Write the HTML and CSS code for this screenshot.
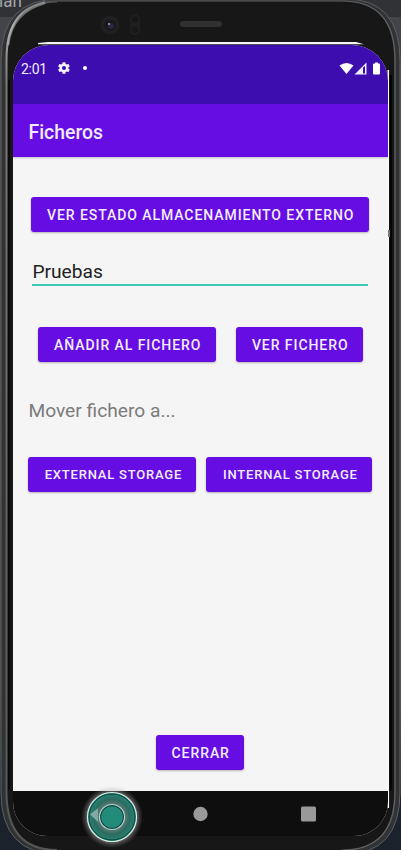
FILE: index.html
```html
<!DOCTYPE html>
<html lang="es">
<head>
<meta charset="utf-8">
<title>Ficheros</title>
<link rel="stylesheet" href="styles.css">
</head>
<body>
<div class="desktop">
  <span class="behind">lan</span>
  <svg class="frame" viewBox="0 0 401 850" aria-hidden="true">
    <defs>
      <linearGradient id="edge" x1="0" y1="0" x2="0" y2="1">
        <stop offset="0" stop-color="#505254"/><stop offset=".03" stop-color="#b0b0b0"/><stop offset=".1" stop-color="#777"/><stop offset=".5" stop-color="#666"/><stop offset="1" stop-color="#555"/>
      </linearGradient>
    </defs>
    <path d="M1 60Q1 -1 60 -1H345Q400 -1 400 60V792Q400 854 345 854H58Q1 854 1 792Z" fill="#303234" stroke="#5d5f61"/>
    <path d="M6 60Q6 1 57 1H342Q394 1 394 60V792Q394 850 342 850H57Q6 850 6 792Z" fill="#171718"/>
    <path d="M57 1.500Q6.500 1.500 6.500 60V792Q6.500 850 57 850" fill="none" stroke="url(#edge)" stroke-width="2"/>
    <path d="M8 44Q12 12 44 3" fill="none" stroke="#aaa" stroke-width="3" stroke-opacity=".6" stroke-linecap="round"/>
    <path d="M57 1H342Q395 1 395 60V792Q395 850 342 850" fill="none" stroke="#626466" stroke-width="1.200"/>
    <path d="M9 80V790" stroke="#060606" stroke-width="1.500"/>
    <path d="M390.500 75V790" stroke="#050505" stroke-width="3"/>
    <path d="M38 43 48 42H356L364 44.300H38Z" fill="#f4f4f6"/>
    <path d="M388.300 70V808" stroke="#fff" stroke-width="1.500"/>
    <circle cx="110" cy="25" r="9.500" fill="#202021"/>
    <circle cx="110" cy="25" r="5.500" fill="#17171b"/>
    <circle cx="111" cy="26" r="3" fill="#292943"/><circle cx="109" cy="24" r="1" fill="#aaa"/>
    <rect x="130" y="14" width="10" height="21" rx="5" fill="#1f1f20"/>
    <circle cx="135" cy="19.500" r="3" fill="#171718"/><circle cx="135" cy="30" r="3" fill="#171718"/>
    <rect x="180" y="21" width="42" height="6" rx="3" fill="#303030"/>
    <path d="M389 230v7" stroke="#777" stroke-width="2"/>
  </svg>
  <main class="screen">
    <header class="status">
      <span class="time">2:01</span>
      <svg class="gear" viewBox="0 0 24 24"><path fill="#f5f2ff" fill-rule="evenodd" d="M19.400 13c.1-.7.1-1.300 0-2l2.100-1.600c.2-.2.3-.5.100-.7l-2-3.400c-.1-.2-.4-.3-.6-.2l-2.500 1c-.5-.4-1.100-.7-1.700-1l-.4-2.600a.5.500 0 0 0-.5-.5h-4a.5.500 0 0 0-.5.500L9 5.100c-.6.300-1.200.6-1.700 1l-2.500-1a.5.500 0 0 0-.6.200l-2 3.400c-.1.300-.1.500.1.700L4.500 11c-.1.700-.1 1.300 0 2l-2.200 1.600c-.2.200-.2.500-.1.700l2 3.400c.1.200.4.300.6.200l2.500-1c.5.400 1.100.7 1.700 1l.4 2.600c0 .3.200.5.500.5h4c.3 0 .5-.2.500-.5l.4-2.600c.6-.3 1.200-.6 1.700-1l2.500 1c.2.100.5 0 .6-.2l2-3.400c.1-.2.1-.5-.1-.7ZM12 15.500a3.500 3.500 0 1 1 0-7 3.500 3.500 0 0 1 0 7Z"/></svg>
      <span class="dot"></span>
      <svg class="signals" viewBox="0 0 43 14">
        <path d="M.5 3.500Q7.500-1.500 14.500 3.500L7.500 12Z" fill="#fff"/>
        <path d="M15.500 12.500 27.500.5V12.500Z" fill="#f1edff"/><path d="M24 5.500V11.500H26V4Z" fill="#3d0db0"/>
        <path d="M34 2.500q0-1 1-1h1V.5h3v1h1q1 0 1 1V11.500q0 1-1 1h-5q-1 0-1-1Z" fill="#fff"/>
      </svg>
    </header>
    <h1 class="appbar">Ficheros</h1>
    <section class="content">
      <button class="btn state">VER ESTADO ALMACENAMIENTO EXTERNO</button>
      <div class="field">Pruebas</div>
      <div class="row actions"><button class="btn add">AÑADIR AL FICHERO</button><button class="btn view">VER FICHERO</button></div>
      <p class="label">Mover fichero a...</p>
      <div class="row storage"><button class="btn external">EXTERNAL STORAGE</button><button class="btn internal">INTERNAL STORAGE</button></div>
      <button class="btn close">CERRAR</button>
    </section>
    <nav class="nav">
      <svg viewBox="0 0 375 45"><circle cx="187.500" cy="23" r="7.200" fill="#999"/><rect x="288" y="15.500" width="15" height="15" rx="1.500" fill="#999"/></svg>
    </nav>
  </main>
  <svg class="touch" viewBox="0 0 70 70" aria-hidden="true">
    <defs><radialGradient id="halo"><stop offset=".7" stop-color="#fff" stop-opacity=".9"/><stop offset=".82" stop-color="#bbb" stop-opacity=".4"/><stop offset="1" stop-color="#888" stop-opacity="0"/></radialGradient>
    <radialGradient id="ring"><stop offset=".48" stop-color="#637f78"/><stop offset=".72" stop-color="#2c6b60"/><stop offset="1" stop-color="#268878"/></radialGradient></defs>
    <circle cx="35" cy="35" r="31" fill="url(#halo)"/>
    <circle cx="35" cy="35" r="24.500" fill="url(#ring)" stroke="#e4efec" stroke-width="1.200"/>
    <circle cx="35" cy="35" r="23" fill="none" stroke="#06473d" stroke-width="1"/>
    <path d="M13 32.500 21 26V40Z" fill="#80aaa2"/>
    <circle cx="35" cy="35" r="12.500" fill="#11483f" stroke="#c3d5d1" stroke-width="1.100"/>
    <circle cx="35" cy="35" r="10.800" fill="#218a78"/>
  </svg>
</div>
</body>
</html>
```
FILE: styles.css
```css
* { box-sizing: border-box; }
body { margin: 0; font-family: Roboto, "Liberation Sans", sans-serif; }
.desktop { position: relative; width: 401px; height: 850px; padding: 45px 13px 14px; overflow: hidden; background: linear-gradient(#303236 0 17px, #424447 17px 50px, #47494b 100px 700px, #1c222b 800px); }
.behind { position: absolute; left: -1px; top: -7px; font-size: 17px; line-height: 17px; color: #a5a7a9; }
.frame { position: absolute; left: 0; top: 0; width: 401px; height: 850px; }
.screen { position: relative; display: flex; flex-direction: column; width: 374.5px; height: 791px; overflow: hidden; border-radius: 36px 36px 34px 34px; background: #f5f5f5; }
.status { height: 59px; flex: none; display: flex; align-items: flex-start; padding: 16px 6px 0 8px; background: #3d0db0; }
.time { width: 36px; color: #f0ebfc; font-size: 14px; line-height: 17px; letter-spacing: -0.3px; }
.gear { width: 14px; height: 14px; }
.dot { width: 4px; height: 4px; margin: 5px 0 0 12px; border-radius: 50%; background: #fff; }
.signals { width: 43px; height: 14px; margin: 0.5px 0 0 auto; }
.appbar { height: 53px; flex: none; margin: 0; padding: 1px 15.5px; background: #650de3; color: #f3eaff; font-size: 19.4px; line-height: 55px; font-weight: 500; position: relative; box-shadow: 0 1px 2px #0003; }
.content { height: 634px; flex: none; display: flex; flex-direction: column; padding: 40.4px 15px 21px 15.4px; }
.btn { height: 34.6px; flex: none; display: block; padding: 0 0 0 1px; border: 0; border-radius: 3px; color: #f4edff; background: #650de3; box-shadow: 0 1px 2px #0004; font: 500 14px/36px Roboto, sans-serif; letter-spacing: 0.93px; white-space: nowrap; }
.state { width: 338px; margin-left: 2.8px; }
.field { width: 336px; height: 42px; margin: 12px 0 0 4px; border-bottom: 2px solid #3dcab9; color: #222; font-size: 19.2px; line-height: 55px; }
.row { display: flex; flex: none; }
.actions { gap: 20px; margin: 41.5px 0 0 9.8px; }
.add { width: 178px; }
.view { width: 127px; }
.label { height: 24px; margin: 37px 0 0; color: #7b7b7b; font-size: 19.2px; line-height: 24px; }
.storage { gap: 10px; margin-top: 34px; }
.external { width: 168px; }
.internal { width: 166px; }
.storage .btn { padding-left: 2px; font-size: 13px; letter-spacing: 0.8px; line-height: 35px; }
.close { width: 88px; margin: auto 0 0 127.8px; }
.nav { height: 45px; flex: none; background: #0e0e0e; }
.nav svg { display: block; width: 375px; height: 45px; }
.touch { position: absolute; left: 77px; top: 781.5px; width: 70px; height: 70px; }
```
